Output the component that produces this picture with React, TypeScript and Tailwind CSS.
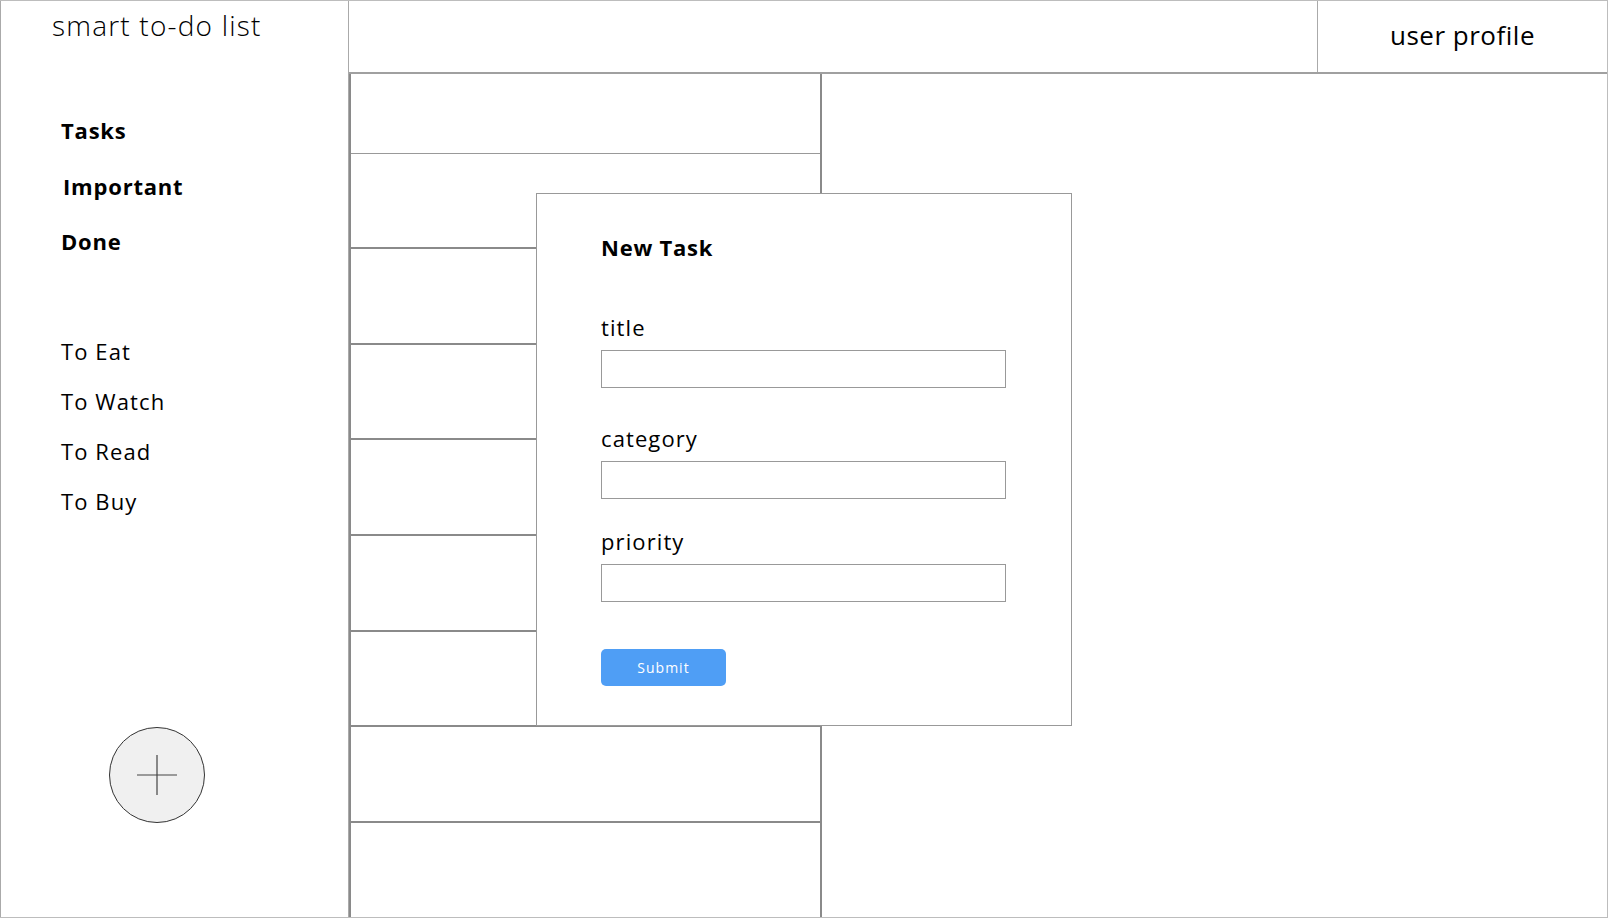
import React from "react";

const font = { fontFamily: '"Open Sans", "Noto Sans", sans-serif' };

const categories = ["To Eat", "To Watch", "To Read", "To Buy"];
const navItems = ["Tasks", "Important", "Done"];
const rowHeights = ["h-[80px]", "h-[95px]", "h-[96px]", "h-[95px]", "h-[96px]", "h-[96px]", "h-[95px]", "h-[96px]"];

function Field({ label, top }: { label: string; top: string }) {
  return (
    <div className={top}>
      <div className="text-[22px] leading-[22px] tracking-[1.1px] text-black">{label}</div>
      <div className="mt-[12px] w-[405px] h-[38px] border border-[#999]" />
    </div>
  );
}

export default function App() {
  return (
    <div
      className="w-[1608px] h-[918px] flex bg-white border-t border-r border-b border-[#bdbdbd] text-black"
      style={font}
    >
      {/* sidebar */}
      <aside className="w-[349px] shrink-0 flex flex-col border-l border-r border-[#aaa]">
        <div className="pt-[4px] pl-[51px] h-[45px] text-[28px] leading-[40px] font-light tracking-[1.2px]">
          smart to-do list
        </div>
        <nav className="mt-[57px] pl-[60px]">
          {navItems.map((item, i) => (
            <div
              key={item}
              className={`h-[55.5px] text-[22px] leading-[55.5px] font-bold tracking-[0.8px] ${i === 1 ? "pl-[2px]" : ""}`}
            >
              {item}
            </div>
          ))}
        </nav>
        <div className="mt-[56px] pl-[60px]">
          {categories.map(c => (
            <div key={c} className="h-[50px] text-[22px] leading-[50px] tracking-[1.1px]">
              {c}
            </div>
          ))}
        </div>
        <button className="mt-[201px] ml-[108px] w-[96px] h-[96px] rounded-full bg-[#f0f0f0] border border-[#333] flex items-center justify-center">
          <svg width="42" height="40" viewBox="0 0 42 40">
            <path d="M21 0 V40 M1 20 H41" stroke="#444" strokeWidth="1.2" fill="none" />
          </svg>
        </button>
      </aside>

      {/* main */}
      <div className="flex-1 flex flex-col">
        <header className="h-[73px] shrink-0 flex justify-end border-b-2 border-[#a0a0a0]">
          <div className="w-[290px] border-l border-[#aaa] flex items-center justify-center text-[26px] tracking-[0.5px] pb-[2px]">
            user profile
          </div>
        </header>

        <div className="relative flex-1 flex">
          <div className="w-[473px] flex flex-col border-l-2 border-r-2 border-[#8a8a8a]">
            {rowHeights.map((h, i) => (
              <div
                key={i}
                className={`${h} shrink-0 ${i === 0 ? "border-b border-[#999]" : "border-b-2 border-[#8a8a8a]"}`}
              />
            ))}
            <div className="flex-1" />
          </div>

          {/* new task dialog */}
          <div className="absolute left-[187px] top-[119px] w-[536px] h-[533px] bg-white border border-[#999] pl-[64px] pt-[42px]">
            <h2 className="text-[22px] leading-[22px] font-bold tracking-[0.75px]">New Task</h2>
            <Field label="title" top="mt-[58px]" />
            <Field label="category" top="mt-[39px]" />
            <Field label="priority" top="mt-[31px]" />
            <button className="mt-[47px] w-[125px] h-[37px] rounded-[5px] bg-[#4f9ef5] text-white text-[14px] tracking-[1px]">
              Submit
            </button>
          </div>
        </div>
      </div>
    </div>
  );
}
